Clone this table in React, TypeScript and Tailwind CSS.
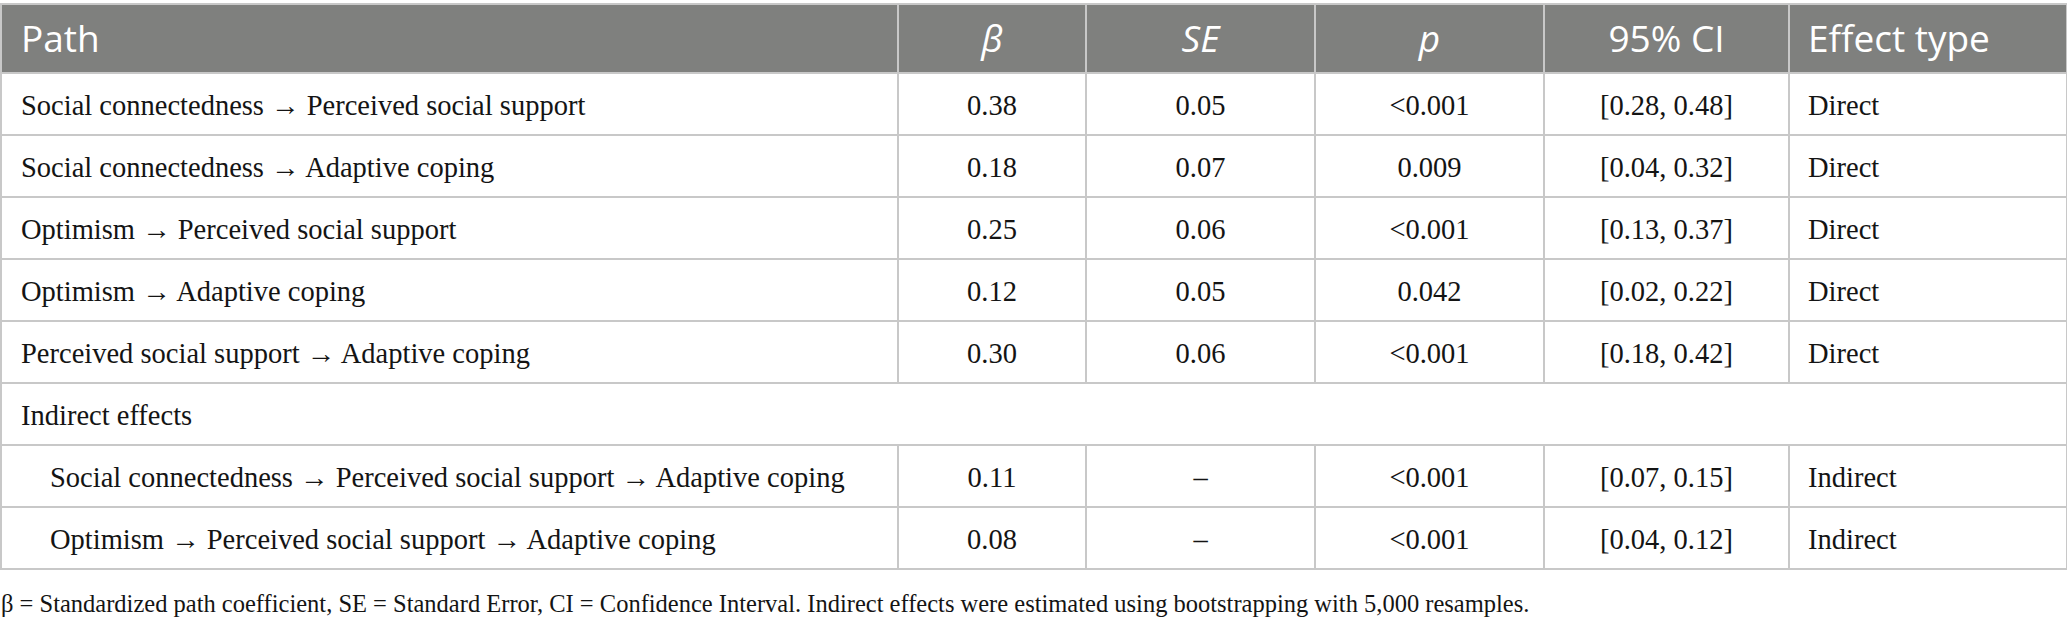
import React from "react";

type Row = { path: string; b: string; se: string; p: string; ci: string; type: string; indent?: boolean };

const rows: Row[] = [
  { path: "Social connectedness → Perceived social support", b: "0.38", se: "0.05", p: "<0.001", ci: "[0.28, 0.48]", type: "Direct" },
  { path: "Social connectedness → Adaptive coping", b: "0.18", se: "0.07", p: "0.009", ci: "[0.04, 0.32]", type: "Direct" },
  { path: "Optimism → Perceived social support", b: "0.25", se: "0.06", p: "<0.001", ci: "[0.13, 0.37]", type: "Direct" },
  { path: "Optimism → Adaptive coping", b: "0.12", se: "0.05", p: "0.042", ci: "[0.02, 0.22]", type: "Direct" },
  { path: "Perceived social support → Adaptive coping", b: "0.30", se: "0.06", p: "<0.001", ci: "[0.18, 0.42]", type: "Direct" },
];

const indirect: Row[] = [
  { path: "Social connectedness → Perceived social support → Adaptive coping", b: "0.11", se: "–", p: "<0.001", ci: "[0.07, 0.15]", type: "Indirect", indent: true },
  { path: "Optimism → Perceived social support → Adaptive coping", b: "0.08", se: "–", p: "<0.001", ci: "[0.04, 0.12]", type: "Indirect", indent: true },
];

const serif = "font-['Liberation_Serif',serif]";
const td = "border-2 border-[#c8c8c8] align-middle";
const tdb = "border-2 border-[#c8c8c8] align-middle pt-[3px]";

function DataRow({ r }: { r: Row }) {
  return (
    <tr className="h-[62px]">
      <td className={`${tdb} ${r.indent ? "pl-[48px]" : "pl-[19px]"}`}>{r.path}</td>
      <td className={`${tdb} text-center`}>{r.b}</td>
      <td className={`${tdb} text-center`}>{r.se}</td>
      <td className={`${tdb} text-center`}>{r.p}</td>
      <td className={`${tdb} text-center`}>{r.ci}</td>
      <td className={`${tdb} pl-[18px]`}>{r.type}</td>
    </tr>
  );
}

export default function App() {
  return (
    <div className="w-[2067px] h-[623px] bg-white pt-[3px]">
      <table className={`table-fixed border-collapse w-[2066px] ${serif} text-[28.5px] leading-tight text-[#141414]`}>
        <colgroup>
          <col className="w-[897px]" />
          <col className="w-[188px]" />
          <col className="w-[229px]" />
          <col className="w-[229px]" />
          <col className="w-[245px]" />
          <col className="w-[278px]" />
        </colgroup>
        <thead>
          <tr className="h-[69px] bg-[#7f807e] text-white font-['Open_Sans',sans-serif] text-[37px] leading-tight font-normal">
            <th className={`${td} text-left font-normal pl-[19px]`}>Path</th>
            <th className={`${td} font-normal italic`}>β</th>
            <th className={`${td} font-normal italic`}>SE</th>
            <th className={`${td} font-normal italic`}>p</th>
            <th className={`${td} font-normal`}>95% CI</th>
            <th className={`${td} text-left font-normal pl-[18px]`}>Effect type</th>
          </tr>
        </thead>
        <tbody>
          {rows.map((r, i) => (
            <DataRow key={i} r={r} />
          ))}
          <tr className="h-[62px]">
            <td colSpan={6} className={`${tdb} pl-[19px]`}>Indirect effects</td>
          </tr>
          {indirect.map((r, i) => (
            <DataRow key={i} r={r} />
          ))}
        </tbody>
      </table>
      <p className={`${serif} text-[24.5px] text-[#141414] pt-[22px] pl-[1px] leading-none`}>
        β = Standardized path coefficient, SE = Standard Error, CI = Confidence Interval. Indirect effects were estimated using bootstrapping with 5,000 resamples.
      </p>
    </div>
  );
}
